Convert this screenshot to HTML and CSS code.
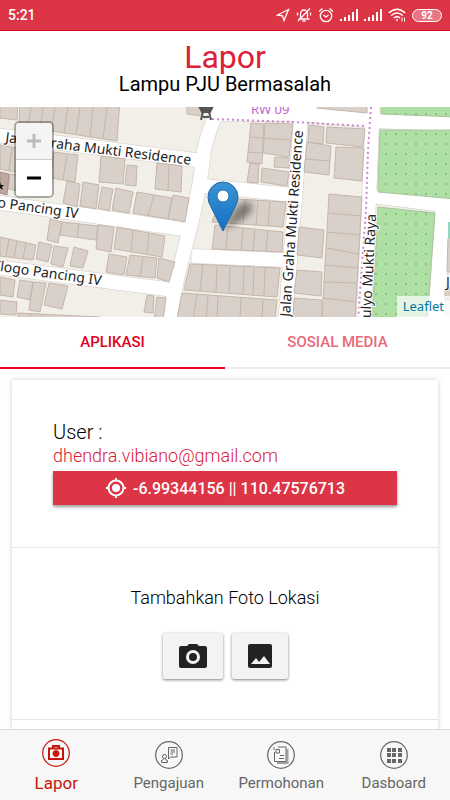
FILE: index.html
```html
<!DOCTYPE html>
<html lang="id">
<head>
    <meta charset="UTF-8">
    <meta name="viewport" content="width=device-width, initial-scale=1.0">
    <title>Lapor - Lampu PJU Bermasalah</title>
    <link rel="stylesheet" href="styles.css">
</head>
<body>
    <div class="status-bar">
        <span class="time">5:21</span>
        <div class="status-icons">
            <svg width="14" height="14" viewBox="0 0 14 14" fill="none" stroke="#fff"><path d="M1.500 7 12.500 1.500 8 12.500 6.500 7.800Z" stroke-width="1.300"/></svg>
            <svg width="16" height="16" viewBox="0 0 16 16" fill="none" stroke="#fff" stroke-width="1.300"><path d="M2.500 12h11M4.500 11V7a3.500 4 0 0 1 7 0v4M6.500 14h3M2 14 14 1.500M1.500 5.500v3M14.500 5.500v3"/></svg>
            <svg width="16" height="16" viewBox="0 0 16 16" fill="none" stroke="#fff" stroke-width="1.300"><circle cx="8" cy="9" r="5.700"/><path d="M1 4.500 4.500 1.500M15 4.500l-3.500-3M5.500 8 8 10l2.500-2"/></svg>
            <svg width="18" height="14" viewBox="0 0 18 14" fill="#fff"><path d="M0 11h2v2H0zM4 9h2v4H4zM8 7h2v6H8zM12 4h2v9h-2zM16 1h2v12h-2z"/></svg>
            <svg width="18" height="14" viewBox="0 0 18 14" fill="#fff"><path d="M0 11h2v2H0zM4 9h2v4H4zM8 7h2v6H8zM12 4h2v9h-2zM16 1h2v12h-2z"/></svg>
            <svg width="18" height="14" viewBox="0 0 18 14" fill="none" stroke="#fff" stroke-width="1.600"><path d="M.8 5Q9-2.500 17.200 5M3.200 7.500q5.800-5 11.600 0M5.800 10q3.200-2.600 6.200 0"/><circle cx="9" cy="12" r="1" fill="#fff" stroke="none"/><path d="M14 9.500v4M16.500 9.500v4" stroke-width="1"/></svg>
            <span class="battery">92</span>
        </div>
    </div>

    <header class="header">
        <h1>Lapor</h1>
        <p>Lampu PJU Bermasalah</p>
    </header>

    <div class="map">
        <svg class="map-tiles" viewBox="0 107 450 210" preserveAspectRatio="xMidYMid slice">
            <defs>
                <pattern id="dots" x="381" y="129" width="10" height="10" patternUnits="userSpaceOnUse">
                    <rect width="10" height="10" fill="#aedfa3"/>
                    <circle cx="5" cy="5" r="1" fill="#7db879"/>
                </pattern>
                <linearGradient id="pin" x1="0" y1="0" x2="0" y2="1">
                    <stop offset="0" stop-color="#3b94d4"/>
                    <stop offset="1" stop-color="#126fc6"/>
                </linearGradient>
                <filter id="soft"><feGaussianBlur stdDeviation="3"/></filter>
            </defs>
            <rect y="107" width="450" height="210" fill="#f2efe9"/>

            <!-- roads -->
            <g class="roads">
                <path d="M221 100 216 114Q208 133 204 150Q200 190 190 228L178 275L168 325"/>
                <path d="M-5 135 204 161M-5 202 190 230M-5 267 174 290"/>
                <path d="M205 186 292 195M192 256 285 260"/>
                <path d="M301 115 295 200 285 325"/>
                <path d="M215 113 300 113 375 120 460 124" class="wide"/>
                <path d="M373 100 371 150 368 225 363 325"/>
                <path d="M371 196 460 207"/>
                <path d="M444 200 436 325" class="wide"/>
            </g>
            <g class="roads-fill">
                <path d="M221 100 216 114Q208 133 204 150Q200 190 190 228L178 275L168 325"/>
                <path d="M-5 135 204 161M-5 202 190 230M-5 267 174 290"/>
                <path d="M205 186 292 195M192 256 285 260"/>
                <path d="M301 115 295 200 285 325"/>
                <path d="M215 113 300 113 375 120 460 124" class="wide"/>
                <path d="M373 100 371 150 368 225 363 325"/>
                <path d="M371 196 460 207"/>
                <path d="M444 200 436 325" class="wide"/>
            </g>

            <!-- parks -->
            <g fill="url(#dots)" stroke="#a9c4a0">
                <path d="M382 100H455V117L381 114Z"/>
                <path d="M380 130H455V199L378 192Z"/>
                <path d="M378 207 435 213 427 320H372Z"/>
            </g>

            <!-- buildings -->
            <g class="buildings">
                <path d="M0 100H18L17 120 0 118Z"/>
                <path d="M20 100H120L117 141 19 126ZM31 107 28 128M43 107 40 130M55 107 51 131M68 107 64 133M80 107 76 135M93 107 90 137M107 107 103 139"/>
                <path d="M187 105H203L202 116 187 114Z"/>
                <path d="M0 145 12 147 9 171 0 169ZM12 147 78 155 75 182 9 171ZM26 149 23 174M40 151 37 177M54 153 51 178M67 155 63 180"/>
                <path d="M10 174 22 176 19 191 8 189Z"/>
                <path d="M101 156 125 159 123 184 99 182ZM127 165 137 166 136 186 125 185ZM157 163 182 166 181 192 155 189ZM169 164 168 191"/>
                <path d="M67 181 80 184 77 207 63 203ZM83 182 99 185 96 209 80 206ZM102 187 113 189 109 211 98 208ZM116 188 133 192 129 213 112 210Z"/>
                <path d="M137 192 172 198 168 219 133 213ZM154 195 148 216M173 195 189 198 185 222 168 219Z"/>
                <path d="M50 219 62 222 58 243 47 240ZM62 222 98 226 96 240 60 235ZM79 223 77 238M98 225 114 227 111 252 96 249ZM117 227 165 236 162 257 114 249ZM133 230 131 252M149 233 147 254"/>
                <path d="M0 237 36 245 33 260 0 256ZM9 239 6 257M17 241 14 258M26 243 23 259M39 242 52 245 48 262 36 259ZM54 246 68 248 63 267 51 264ZM74 247 88 251 83 268 70 266Z"/>
                <path d="M109 254 127 257 124 275 106 272ZM130 255 157 258 155 278 126 275ZM143 257 140 277M159 258 175 262 169 282 157 278Z"/>
                <path d="M0 277 15 280 13 297 0 295ZM20 280 33 282 30 300 17 297ZM33 282 46 283 40 312 29 310ZM49 283 68 286 62 309 44 305ZM0 300 17 302 16 315 0 314ZM18 313 100 317V320H18ZM30 313V320M42 314V320M147 295 154 296 153 313 144 312ZM157 297 166 298 163 320H154Z"/>
                <path d="M190 264 280 268 277 297 184 290ZM203 265 200 291M217 266 216 292M230 267 229 293M244 267 243 294M254 268 253 295M265 268 264 296"/>
                <path d="M182 293 277 300 275 320H177ZM197 294 193 320M208 296 206 320M218 296 217 320M241 298 240 320M263 299 262 320"/>
                <path d="M221 198 286 202 283 227 212 222ZM233 199 230 223M245 199 243 224M258 200 256 225M270 201 268 226"/>
                <path d="M215 225 283 232 282 252 212 249ZM228 226 226 250M243 228 241 251M255 229 253 251M268 230 266 252"/>
                <path d="M251 123 264 124 262 164 247 162ZM250 137 263 138M248 152 262 153M250 163 259 164 258 183 247 182ZM265 123 293 124 289 157 263 153ZM264 138 291 140M275 157 289 158V168L274 167ZM262 168 289 172 287 186 261 182Z"/>
                <path d="M309 125 324 127 323 144 308 142ZM327 127 365 129 363 147 326 143ZM307 142 331 146 329 175 304 172ZM306 159 330 161M336 147 364 148 362 181 334 178Z"/>
                <path d="M329 194 362 197 355 320H322ZM328 213 361 216M327 232 360 235M326 248 359 254M324 265 358 268M323 282 357 283M322 298 356 302"/>
                <path d="M299 227 324 230 322 258 297 255ZM297 270 322 272 321 296 294 293ZM294 298 322 300V320H293Z"/>
                <path d="M317 100H367V113L317 108Z"/>
                <path d="M448 238 455 239V272H447ZM445 288H455V300H445Z"/>
            </g>
            <path d="M0 172 9 174 7 195 0 193Z" fill="#bfa89d" stroke="#a89186"/>
            <path d="M0 182 1 185 4 185 2 187 3 190 0 188Z" fill="#111"/>
            <path d="M448 222H452V238H448Z" fill="#91d6bd"/>

            <!-- water tower -->
            <path d="M199 106H213L210 112H202ZM203 112 201 120M209 112 211 120M203 117H209" fill="#555" stroke="#555" stroke-width="2"/>

            <!-- boundary -->
            <g fill="none" stroke="#cf85d6" stroke-width="2" stroke-dasharray="2 3">
                <path d="M212 119 240 120 293 122 365 126"/>
                <path d="M371 107 368 150 366 210 358 320"/>
            </g>
            <text x="251" y="114" font-size="13" fill="#c264cc">RW 09</text>

            <g class="street-names">
                <text transform="translate(5 142) rotate(7)">Jalan Graha Mukti Residence</text>
                <text transform="translate(-3 207) rotate(8)">o Pancing IV</text>
                <text transform="translate(-8 270) rotate(8)">Tlogo Pancing IV</text>
                <text transform="translate(290 317) rotate(-86)">Jalan Graha Mukti Residence</text>
                <text transform="translate(370 331) rotate(-87)">Mulyo Mukti Raya</text>
                <text transform="translate(446 287)">J</text>
            </g>

            <!-- marker -->
            <path d="M224 230 234 210Q246 197 252 205Q254 213 240 221Z" fill="#000" opacity=".4" filter="url(#soft)"/>
            <path d="M223 231 211 207Q208 202 208 197A15 15 0 0 1 238 197Q238 202 235 207Z" fill="url(#pin)" stroke="#2068a3"/>
            <circle cx="223" cy="196" r="6" fill="#fff" stroke="#2874b2"/>
        </svg>
        <div class="zoom-control">
            <button type="button" aria-label="Zoom in" disabled>
                <svg width="16" height="16" viewBox="0 0 16 16"><path d="M1 8H15M8 1V15" stroke="#bbb" stroke-width="3"/></svg>
            </button>
            <button type="button" aria-label="Zoom out">
                <svg width="16" height="16" viewBox="0 0 16 16"><path d="M1 8H15" stroke="#000" stroke-width="3"/></svg>
            </button>
        </div>
        <a class="attribution" href="#leaflet">Leaflet</a>
    </div>

    <div class="tabs">
        <button type="button" class="tab active">APLIKASI</button>
        <button type="button" class="tab">SOSIAL MEDIA</button>
    </div>

    <main class="content">
        <div class="card">
            <section class="user">
                <h2>User :</h2>
                <p class="email">dhendra.vibiano@gmail.com</p>
                <button type="button" class="location">
                    <svg width="22" height="22" viewBox="0 0 22 22"><circle cx="11" cy="11" r="7.500" fill="none" stroke="#fff" stroke-width="2"/><circle cx="11" cy="11" r="4" fill="#fff"/><path d="M11 1V4M11 18V21M1 11H4M18 11H21" stroke="#fff" stroke-width="2"/></svg>
                    -6.99344156 || 110.47576713
                </button>
            </section>
            <section class="photo">
                <p>Tambahkan Foto Lokasi</p>
                <div class="photo-buttons">
                    <button type="button" aria-label="Kamera">
                        <svg width="28" height="24" viewBox="0 0 28 24"><path d="M2 2H8L10 0H18L20 2H26Q28 2 28 4V22Q28 24 26 24H2Q0 24 0 22V4Q0 2 2 2Z" fill="#222"/><circle cx="14" cy="13" r="5.500" fill="none" stroke="#f3f3f3" stroke-width="3"/></svg>
                    </button>
                    <button type="button" aria-label="Galeri">
                        <svg width="24" height="24" viewBox="0 0 24 24"><rect width="24" height="24" rx="2" fill="#222"/><path d="M3 20 8 14 11 18 16 12 22 20Z" fill="#f3f3f3"/></svg>
                    </button>
                </div>
            </section>
            <section class="more"></section>
        </div>
    </main>

    <nav class="bottom-nav">
        <a href="#lapor" class="active">
            <svg width="28" height="28" viewBox="0 0 28 28" fill="none" stroke="currentColor"><circle cx="14" cy="14" r="13.300" stroke-width="1.200"/><path d="M7 9.500H21V20H7ZM11 9V7H17V9" stroke-width="2"/><circle cx="14" cy="14.500" r="3" fill="currentColor"/></svg>
            Lapor
        </a>
        <a href="#pengajuan">
            <svg width="28" height="28" viewBox="0 0 28 28" fill="none" stroke="currentColor"><circle cx="14" cy="14" r="13.300" stroke-width="1.200"/><path d="M13.500 6.500H22V16H15.500L13.500 18ZM15.500 9H20M15.500 11H20M15.500 13H18"/><circle cx="9.500" cy="15.500" r="2"/><path d="M8.500 17.500 8 19 6.500 19.500V21.500H12.500V19.500L11 19 10.500 17.500"/></svg>
            Pengajuan
        </a>
        <a href="#permohonan">
            <svg width="28" height="28" viewBox="0 0 28 28" fill="none" stroke="currentColor"><circle cx="14" cy="14" r="13.300" stroke-width="1.200"/><path d="M10 22H20.500V8" stroke-width="2" opacity=".6"/><path d="M11 6H19V20.500H7.500V11M7 6V9M9 8.500H12.500V12H9ZM13 14.500H17M12 17.500H17"/></svg>
            Permohonan
        </a>
        <a href="#dasboard">
            <svg width="28" height="28" viewBox="0 0 28 28"><circle cx="14" cy="14" r="13.300" fill="none" stroke="currentColor" stroke-width="1.200"/><path d="M7 7H11V11H7ZM12 7H16V11H12ZM18 7H22V11H18ZM7 12H11V16H7ZM12 12H16V16H12ZM18 12H22V16H18ZM7 18H11V22H7ZM12 18H16V22H12ZM18 18H22V22H18Z" fill="currentColor"/></svg>
            Dasboard
        </a>
    </nav>
</body>
</html>
```
FILE: styles.css
```css
* {
    box-sizing: border-box;
}

body {
    margin: 0;
    height: 100vh;
    display: flex;
    flex-direction: column;
    overflow: hidden;
    background-color: #fff;
    color: #000;
    font-family: Roboto, sans-serif;
}

h1, h2, p {
    margin: 0;
    font-weight: 400;
}

button {
    font-family: inherit;
    border: none;
    cursor: pointer;
}

a {
    text-decoration: none;
}

svg {
    display: block;
    flex: none;
}

.status-bar {
    display: flex;
    justify-content: space-between;
    align-items: center;
    padding: 0 8px;
    height: 31px;
    flex: none;
    background-color: #dc3545;
    border-bottom: 1px solid #d8001b;
    color: #fff;
}

.time {
    font-size: 14px;
    font-weight: 500;
}

.status-icons {
    display: flex;
    align-items: center;
    gap: 6px;
}

.battery {
    width: 30px;
    height: 13px;
    border: 1px solid #fff;
    border-radius: 7px;
    background-color: #e87582;
    font-size: 10px;
    font-weight: 700;
    line-height: 11px;
    text-align: center;
}

.header {
    flex: none;
    padding: 10px 0 12px;
    text-align: center;
}

.header h1 {
    color: #dc2038;
    font-size: 32px;
    line-height: 32px;
}

.header p {
    font-size: 20px;
    line-height: 22px;
}

.map {
    position: relative;
    flex: none;
    height: 210px;
}

.map-tiles {
    width: 100%;
    height: 100%;
    font-family: "Noto Sans", sans-serif;
}

.roads path {
    fill: none;
    stroke: #cfcbc7;
    stroke-width: 15px;
}

.roads-fill path {
    fill: none;
    stroke: #fff;
    stroke-width: 14px;
}

.roads .wide {
    stroke-width: 17px;
}

.roads-fill .wide {
    stroke-width: 16px;
}

.buildings path {
    fill: #d9d0c9;
    stroke: #c5b6ab;
}

.street-names text {
    font-size: 14px;
    fill: #222;
    stroke: #fff;
    stroke-width: 2px;
    paint-order: stroke;
}

.zoom-control {
    position: absolute;
    top: 14px;
    left: 14px;
    border: 2px solid rgba(0, 0, 0, 0.3);
    border-radius: 5px;
    background-clip: padding-box;
}

.zoom-control button {
    display: flex;
    align-items: center;
    justify-content: center;
    width: 36px;
    height: 36px;
    padding: 0;
    background-color: #fff;
    border-radius: 0 0 3px 3px;
}

.zoom-control button:first-child {
    height: 37px;
    background-color: #f4f4f4;
    border-bottom: 1px solid #ccc;
    border-radius: 3px 3px 0 0;
}

.attribution {
    position: absolute;
    right: 0;
    bottom: 0;
    padding: 0 6px;
    background-color: rgba(255, 255, 255, 0.7);
    color: #0078a8;
    font-family: "Noto Sans", sans-serif;
    font-size: 13px;
    line-height: 21px;
}

.tabs {
    display: flex;
    flex: none;
}

.tab {
    flex: 1;
    height: 52px;
    padding: 0;
    background-color: #fff;
    border-bottom: 2px solid #ededed;
    color: #e8697a;
    font-size: 15px;
    font-weight: 500;
}

.tab.active {
    border-bottom-color: #e3001b;
    color: #e00020;
}

.content {
    flex: 1;
    min-height: 0;
    padding: 11px 12px 0;
    overflow: hidden;
}

.card {
    border-radius: 2px;
    box-shadow: 0 0 5px rgba(0, 0, 0, 0.2);
}

.user {
    padding: 40px 41px 42px;
    border-bottom: 1px solid #e5e5e5;
}

.user h2 {
    font-size: 20px;
    font-weight: 300;
    line-height: 24px;
}

.email {
    color: #dc2038;
    font-size: 18px;
    font-weight: 300;
    line-height: 24px;
}

.location {
    display: flex;
    align-items: center;
    justify-content: center;
    gap: 6px;
    width: 100%;
    height: 34px;
    margin-top: 3px;
    background-color: #dc3545;
    box-shadow: 0 2px 3px rgba(0, 0, 0, 0.4);
    color: #fff;
    font-size: 16px;
    font-weight: 500;
}

.photo {
    padding: 38px 40px 40px;
    border-bottom: 1px solid #e5e5e5;
    text-align: center;
}

.photo p {
    font-size: 18px;
    font-weight: 300;
    line-height: 24px;
}

.photo-buttons {
    display: flex;
    justify-content: center;
    gap: 9px;
    margin-top: 23px;
}

.photo-buttons button {
    height: 46px;
    padding: 0 16px;
    background-color: #f3f3f3;
    border-radius: 2px;
    box-shadow: 0 1px 3px rgba(0, 0, 0, 0.5);
}

.more {
    height: 120px;
}

.bottom-nav {
    display: flex;
    flex: none;
    height: 71px;
    background-color: #f7f7f7;
    border-top: 1px solid #dcdcdc;
}

.bottom-nav a {
    display: flex;
    flex: 1;
    flex-direction: column;
    align-items: center;
    justify-content: flex-end;
    gap: 4px;
    padding-bottom: 7px;
    color: #666;
    font-size: 15px;
    line-height: 20px;
}

.bottom-nav .active {
    gap: 6px;
    color: #c3170c;
    font-size: 17px;
}
```
